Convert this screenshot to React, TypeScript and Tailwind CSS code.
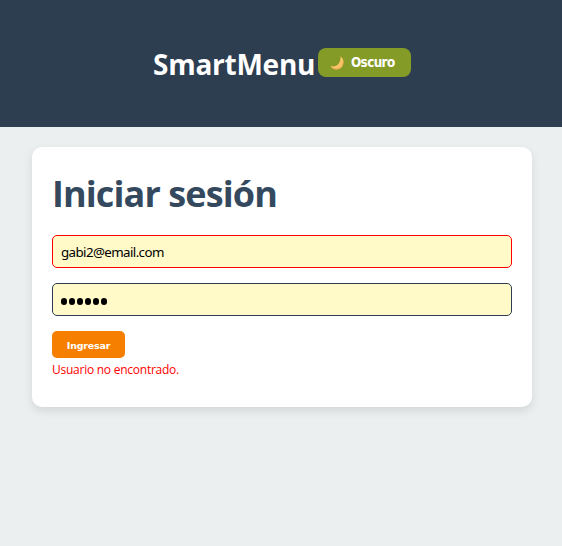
function Moon() {
  return (
    <svg className="mt-[2px] h-[14px] w-[14px]" viewBox="0 0 14 14" aria-hidden="true">
      <path d="M10.4.6c1.900 1 3.200 3 3.100 5.700-.1 4.200-3.200 7.200-7 7.200-2.900 0-5-1.400-6-3.700 2.100 1 5 .8 7.200-1.100C9.900 6.800 10.900 4 10.400.6Z" fill="#fcc568" />
      <path d="M12.900 5c.1 4-2.600 7.500-6.400 7.800-2 .1-3.700-.6-4.800-1.700" fill="none" stroke="#f5a550" strokeWidth=".8" />
    </svg>
  );
}

export default function App() {
  return (
    <div className="min-h-screen bg-[#ebeff0] font-['Open_Sans','Noto_Sans',sans-serif]">
      <header className="flex h-[127px] items-center bg-[#2c3e50] pl-[153px]">
        <h1 className="w-[165px] whitespace-nowrap text-[28px] leading-[38px] font-bold tracking-[-0.25px] text-white">SmartMenu</h1>
        <button className="mb-[3px] flex h-[29px] w-[93px] items-center rounded-lg bg-[#859b27] pl-[12px] font-['DejaVu_Sans_Condensed','DejaVu_Sans',sans-serif] text-[13.33px] font-bold tracking-[-0.6px] text-white">
          <Moon />
          <span className="mt-[2px] ml-[7px] whitespace-nowrap">Oscuro</span>
        </button>
      </header>
      <main className="mx-[30px] ml-[32px] mt-5 h-[260px] rounded-[10px] bg-white px-5 pt-[25px] shadow-[0_4px_10px_rgba(0,0,0,0.1)]">
        <h2 className="mb-[20px] whitespace-nowrap text-[36px] leading-[43px] font-bold tracking-[-0.9px] text-[#34495e]">Iniciar sesión</h2>
        <input
          type="text"
          defaultValue="gabi2@email.com"
          className="mb-[15px] block h-[33px] w-full rounded-[5px] border border-[#ff0000] bg-[#fffac8] px-2 font-['Noto_Sans',sans-serif] text-[13.33px] tracking-[-0.6px] text-black outline-none"
        />
        <div className="mb-[15px] flex h-[33px] w-full items-center gap-[2px] rounded-[5px] border border-[#2c3e50] bg-[#fffac8] px-2" aria-label="Contraseña">
          {[0, 1, 2, 3, 4, 5].map((i) => (
            <span key={i} className="mt-[3px] h-[7px] w-[6px] rounded-full bg-black" />
          ))}
        </div>
        <button className="block h-[27px] w-[73px] rounded-[5px] bg-[#f77f00] pt-[3px] font-['DejaVu_Sans',sans-serif] text-[9.5px] font-bold tracking-[-0.2px] text-white">
          Ingresar
        </button>
        <p className="mt-[3px] whitespace-nowrap text-[12px] leading-[18px] tracking-[-0.25px] text-[#ff0000]">Usuario no encontrado.</p>
      </main>
    </div>
  );
}
